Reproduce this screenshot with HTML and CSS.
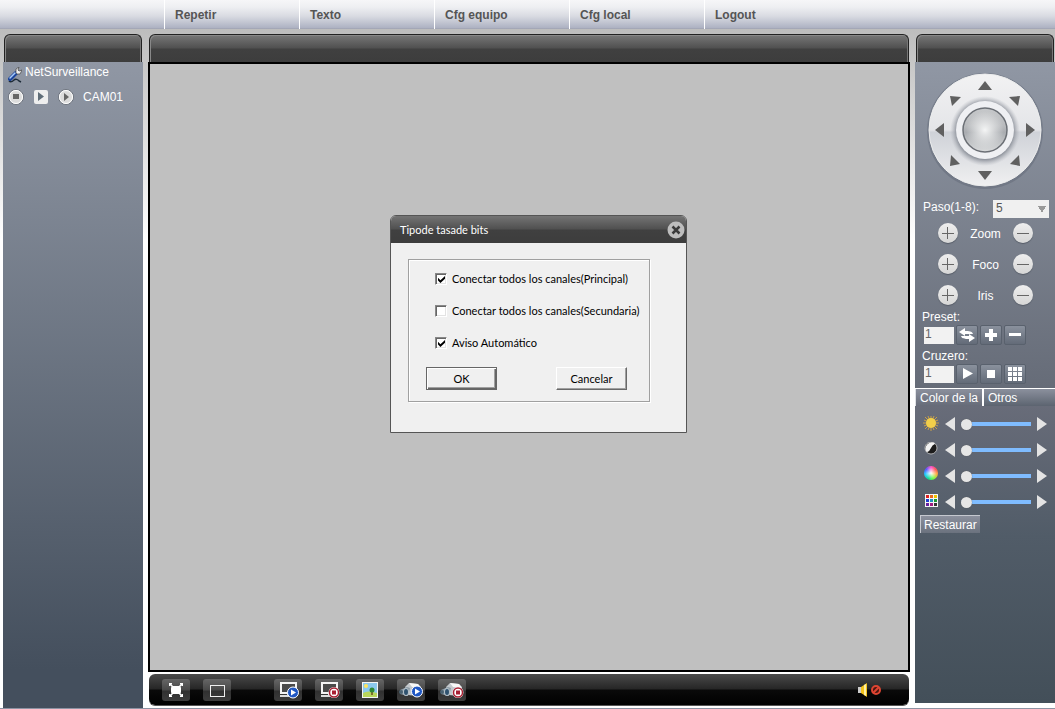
FILE: index.html
```html
<!DOCTYPE html>
<html lang="es">
<head>
    <meta charset="UTF-8">
    <title>NetSurveillance</title>
    <link rel="stylesheet" href="styles.css">
</head>
<body>

    <nav class="menu">
        <a href="#">Repetir</a>
        <a href="#">Texto</a>
        <a href="#">Cfg equipo</a>
        <a href="#">Cfg local</a>
        <a href="#">Logout</a>
    </nav>

    <div class="layout">

        <!-- cámaras -->
        <aside class="side">
            <div class="bar"></div>
            <div class="cams">
                <div class="device">
                    <svg class="tool" width="14" height="16" viewBox="0 0 14 16">
                        <path d="M1 14c2 2 4 0 5-1s4-1 5 1l2 1" fill="none" stroke="#1d2b38" stroke-width="1.500"/>
                        <path d="M2 12L8 6" stroke="#1c459c" stroke-width="4" stroke-linecap="round"/>
                        <path d="M2 11L7 6" stroke="#a9ccfa" stroke-width="1.500" stroke-linecap="round"/>
                        <path d="M8 6V2l3-2-1 3 1 1 3-1-2 4H9z" fill="#f0f0f0" stroke="#444" stroke-width="0.700"/>
                    </svg>
                    <span>NetSurveillance</span>
                </div>
                <div class="cam">
                    <button class="icon-btn" aria-label="Detener">
                        <svg width="16" height="16" viewBox="0 0 16 16"><circle cx="8" cy="8" r="7.500" fill="#e6e6e6" stroke="#6d737d"/><circle cx="8" cy="8" r="6.500" fill="#dcdcdc" stroke="#fff"/><rect x="5" y="5" width="6" height="5" fill="#666"/></svg>
                    </button>
                    <button class="icon-btn" aria-label="Flujo">
                        <svg width="16" height="16" viewBox="0 0 16 16"><rect x="1" y="1" width="14" height="14" rx="2" fill="#eee"/><path d="M5 3l6 4.500L5 12z" fill="#5f6d78"/></svg>
                    </button>
                    <button class="icon-btn" aria-label="Reproducir">
                        <svg width="16" height="16" viewBox="0 0 16 16"><circle cx="8" cy="8" r="7.500" fill="#e6e6e6" stroke="#6d737d"/><circle cx="8" cy="8" r="6.500" fill="#dcdcdc" stroke="#fff"/><path d="M6 4l5 4-5 4z" fill="#666"/></svg>
                    </button>
                    <span>CAM01</span>
                </div>
            </div>
        </aside>

        <!-- video -->
        <main class="center">
            <div class="bar"></div>
            <div class="video">
                <form class="dialog" role="dialog" aria-label="Tipode tasade bits">
                    <div class="dialog-head">
                        <span>Tipode tasade bits</span>
                        <button type="button" class="icon-btn" aria-label="Cerrar">
                            <svg width="18" height="18" viewBox="0 0 18 18"><circle cx="9" cy="9" r="8.500" fill="#bdbdbd"/><path d="M5.500 5.500l7 7M12.500 5.500l-7 7" stroke="#3a3a3a" stroke-width="2.500"/></svg>
                        </button>
                    </div>
                    <div class="dialog-body">
                        <div class="group">
                            <label class="check"><input type="checkbox" checked> Conectar todos los canales(Principal)</label>
                            <label class="check"><input type="checkbox"> Conectar todos los canales(Secundaria)</label>
                            <label class="check"><input type="checkbox" checked> Aviso Automático</label>
                            <div class="actions">
                                <button type="button" class="btn btn-default">OK</button>
                                <button type="button" class="btn">Cancelar</button>
                            </div>
                        </div>
                    </div>
                </form>
            </div>

            <div class="toolbar">
                <button class="tool-btn" aria-label="Pantalla completa">
                    <svg width="28" height="22" viewBox="0 0 28 22"><path d="M8 5l12 12M20 5L8 17" stroke="#fff" stroke-width="1.500"/><rect x="9" y="7" width="10" height="8" rx="2" fill="#fff"/><path d="M7 4h3v1L8 7H7zM21 4h-3v1l2 2h1zM7 18h3v-1l-2-2H7zM21 18h-3v-1l2-2h1z" fill="#fff"/></svg>
                </button>
                <button class="tool-btn" aria-label="Una ventana">
                    <svg width="28" height="22" viewBox="0 0 28 22"><rect x="7.500" y="6.500" width="14" height="11" fill="none" stroke="#eee"/></svg>
                </button>
                <button class="tool-btn gap" aria-label="Reproducir todo">
                    <svg width="28" height="22" viewBox="0 0 28 22"><rect x="7" y="4" width="15" height="10" fill="#4a4a4a" stroke="#f4f4f4" stroke-width="2"/><path d="M6 17h8v-2" fill="none" stroke="#ddd" stroke-width="2"/><circle cx="19" cy="13.500" r="5.500" fill="#1f57c4" stroke="#fff"/><path d="M17 10.500l5 3-5 3z" fill="#fff"/></svg>
                </button>
                <button class="tool-btn" aria-label="Detener todo">
                    <svg width="28" height="22" viewBox="0 0 28 22"><rect x="7" y="4" width="15" height="10" fill="#4a4a4a" stroke="#f4f4f4" stroke-width="2"/><path d="M6 17h8v-2" fill="none" stroke="#ddd" stroke-width="2"/><circle cx="19" cy="13.500" r="5.500" fill="#fff"/><circle cx="19" cy="13.500" r="4.500" fill="#fff" stroke="#a81f32" stroke-width="1.500"/><rect x="17" y="11.500" width="4" height="4" fill="#a81f32"/></svg>
                </button>
                <button class="tool-btn" aria-label="Capturar">
                    <svg width="28" height="22" viewBox="0 0 28 22"><rect x="6" y="3" width="16" height="16" fill="#f4f4f4"/><rect x="7" y="4" width="14" height="11" fill="#8cc9ee"/><path d="M7 14q5-3 14 0v4H7z" fill="#b9d65c"/><circle cx="10" cy="7" r="2" fill="#ffe45c"/><path d="M16 16v-3" stroke="#6b4a1d" stroke-width="1.500"/><circle cx="16" cy="11" r="2.500" fill="#2f8a35"/></svg>
                </button>
                <button class="tool-btn" aria-label="Grabar">
                    <svg width="28" height="22" viewBox="0 0 28 22"><path d="M8 8l4-4 9 1 3 3-4 9-9-1z" fill="#c3c8cc"/><path d="M12 4l9 1 3 4-9-1z" fill="#f7f7f7"/><path d="M3 11l7-3 3 1-2 8-8-2z" fill="#8b9aa5"/><ellipse cx="9" cy="13" rx="3" ry="4" fill="#b6c0c7"/><ellipse cx="9" cy="13" rx="2" ry="3" fill="#2f526f"/><circle cx="4" cy="13" r="2" fill="#4b6272"/><circle cx="20" cy="12.500" r="5.500" fill="#1f57c4" stroke="#fff"/><path d="M18 9.500l5 3-5 3z" fill="#fff"/></svg>
                </button>
                <button class="tool-btn" aria-label="Detener grabación">
                    <svg width="28" height="22" viewBox="0 0 28 22"><path d="M8 8l4-4 9 1 3 3-4 9-9-1z" fill="#c3c8cc"/><path d="M12 4l9 1 3 4-9-1z" fill="#f7f7f7"/><path d="M3 11l7-3 3 1-2 8-8-2z" fill="#8b9aa5"/><ellipse cx="9" cy="13" rx="3" ry="4" fill="#b6c0c7"/><ellipse cx="9" cy="13" rx="2" ry="3" fill="#2f526f"/><circle cx="4" cy="13" r="2" fill="#4b6272"/><circle cx="20" cy="13.500" r="5.500" fill="#fff"/><circle cx="20" cy="13.500" r="4.500" fill="#fff" stroke="#a81f32" stroke-width="1.500"/><rect x="18" y="11.500" width="4" height="4" fill="#a81f32"/></svg>
                </button>
                <button class="icon-btn sound" aria-label="Sonido">
                    <svg width="26" height="16" viewBox="0 0 26 16"><path d="M1 5h3v6H1z" fill="#ccc"/><path d="M4 5l6-4v14l-6-4z" fill="#f3c21b"/><path d="M7 3l2-1v12l-2-1z" fill="#fff0a0"/><circle cx="19" cy="8" r="4" fill="#4a1510" stroke="#dd4532" stroke-width="2"/><path d="M16 11l6-6" stroke="#dd4532" stroke-width="2"/></svg>
                </button>
            </div>
        </main>

        <!-- PTZ y color -->
        <aside class="side side-right">
            <div class="bar"></div>
            <div class="ptz">
                <div class="dial">
                    <svg width="118" height="118" viewBox="0 0 118 118">
                        <defs>
                            <linearGradient id="ring" x1="0" y1="0" x2="0" y2="1">
                                <stop offset="0" stop-color="#f2f2f3"/>
                                <stop offset="0.500" stop-color="#e4e5e8"/>
                                <stop offset="0.520" stop-color="#cfd2d8"/>
                                <stop offset="1" stop-color="#f0f0f1"/>
                            </linearGradient>
                            <radialGradient id="shade">
                                <stop offset="0.800" stop-color="#8a8f98"/>
                                <stop offset="1" stop-color="#b4b7be" stop-opacity="0"/>
                            </radialGradient>
                            <linearGradient id="ball" x1="0" y1="0" x2="0" y2="1">
                                <stop offset="0" stop-color="#c6c8ca"/>
                                <stop offset="0.400" stop-color="#b9bbbe"/>
                                <stop offset="0.550" stop-color="#a9acb0"/>
                                <stop offset="1" stop-color="#d9dbdc"/>
                            </linearGradient>
                            <radialGradient id="glow">
                                <stop offset="0" stop-color="#f4f5f5"/>
                                <stop offset="1" stop-color="#f4f5f5" stop-opacity="0"/>
                            </radialGradient>
                        </defs>
                        <circle cx="59" cy="60" r="58" fill="#596270" opacity="0.400"/>
                        <circle cx="59" cy="59" r="56" fill="url(#ring)" stroke="#eceded"/>
                        <circle cx="59" cy="60" r="35" fill="url(#shade)"/>
                        <circle cx="59" cy="59" r="29" fill="#eff0f3"/>
                        <circle cx="59" cy="59" r="22" fill="url(#ball)" stroke="#6b6f75" stroke-width="1.500"/>
                        <circle cx="59" cy="59" r="19" fill="url(#glow)"/>
                    </svg>
                    <button class="dir up" aria-label="Arriba"><svg width="14" height="14" viewBox="0 0 14 14"><path d="M7 2l7 9H0z"/></svg></button>
                    <button class="dir down" aria-label="Abajo"><svg width="14" height="14" viewBox="0 0 14 14"><path d="M7 12L0 3h14z"/></svg></button>
                    <button class="dir left" aria-label="Izquierda"><svg width="14" height="14" viewBox="0 0 14 14"><path d="M2 7l9-7v14z"/></svg></button>
                    <button class="dir right" aria-label="Derecha"><svg width="14" height="14" viewBox="0 0 14 14"><path d="M12 7L3 0v14z"/></svg></button>
                    <button class="dir up-left" aria-label="Arriba izquierda"><svg width="14" height="14" viewBox="0 0 14 14"><path d="M2 2l11 1-9 9z"/></svg></button>
                    <button class="dir up-right" aria-label="Arriba derecha"><svg width="14" height="14" viewBox="0 0 14 14"><path d="M12 2L1 3l9 9z"/></svg></button>
                    <button class="dir down-left" aria-label="Abajo izquierda"><svg width="14" height="14" viewBox="0 0 14 14"><path d="M2 12l1-11 9 9z"/></svg></button>
                    <button class="dir down-right" aria-label="Abajo derecha"><svg width="14" height="14" viewBox="0 0 14 14"><path d="M12 12l-1-11-9 9z"/></svg></button>
                </div>

                <div class="step">
                    <label for="step">Paso(1-8):</label>
                    <select id="step"><option>5</option></select>
                </div>

                <div class="lens">
                    <button class="round" aria-label="Zoom más"><svg width="20" height="20" viewBox="0 0 20 20"><path d="M9.500 4v12M4 10.500h12"/></svg></button>
                    <span>Zoom</span>
                    <button class="round" aria-label="Zoom menos"><svg width="20" height="20" viewBox="0 0 20 20"><path d="M4 10.500h12"/></svg></button>
                </div>
                <div class="lens">
                    <button class="round" aria-label="Foco más"><svg width="20" height="20" viewBox="0 0 20 20"><path d="M9.500 4v12M4 10.500h12"/></svg></button>
                    <span>Foco</span>
                    <button class="round" aria-label="Foco menos"><svg width="20" height="20" viewBox="0 0 20 20"><path d="M4 10.500h12"/></svg></button>
                </div>
                <div class="lens">
                    <button class="round" aria-label="Iris más"><svg width="20" height="20" viewBox="0 0 20 20"><path d="M9.500 4v12M4 10.500h12"/></svg></button>
                    <span>Iris</span>
                    <button class="round" aria-label="Iris menos"><svg width="20" height="20" viewBox="0 0 20 20"><path d="M4 10.500h12"/></svg></button>
                </div>

                <div class="preset">
                    <label for="preset">Preset:</label>
                    <div class="preset-row">
                        <input type="text" id="preset" value="1">
                        <button class="small" aria-label="Ir"><svg width="20" height="18" viewBox="0 0 20 18"><path d="M2 6l6-4v3c4 0 7 0 8 3H8v2zM18 12l-6 4v-3c-4 0-7 0-8-3h8V8z"/></svg></button>
                        <button class="small" aria-label="Agregar"><svg width="20" height="18" viewBox="0 0 20 18"><path d="M8 3h4v4h4v4h-4v4H8v-4H4V7h4z"/></svg></button>
                        <button class="small" aria-label="Quitar"><svg width="20" height="18" viewBox="0 0 20 18"><path d="M4 7h12v3H4z"/></svg></button>
                    </div>
                </div>
                <div class="preset">
                    <label for="cruise">Cruzero:</label>
                    <div class="preset-row">
                        <input type="text" id="cruise" value="1">
                        <button class="small" aria-label="Iniciar"><svg width="20" height="18" viewBox="0 0 20 18"><path d="M6 3l10 5.500L6 14z"/></svg></button>
                        <button class="small" aria-label="Parar"><svg width="20" height="18" viewBox="0 0 20 18"><path d="M6 5h8v8H6z"/></svg></button>
                        <button class="small" aria-label="Lista"><svg width="20" height="18" viewBox="0 0 20 18"><path d="M3 2h4v4H3zM8 2h4v4H8zM13 2h4v4h-4zM3 7h4v4H3zM8 7h4v4H8zM13 7h4v4h-4zM3 12h4v4H3zM8 12h4v4H8zM13 12h4v4h-4z"/></svg></button>
                    </div>
                </div>
            </div>

            <div class="tabs">
                <button class="tab">Color de la</button>
                <button class="tab">Otros</button>
            </div>

            <div class="color">
                <div class="slider">
                    <svg width="16" height="16" viewBox="0 0 16 16"><path d="M8 0v15M0 7h16M2 1l12 12M14 1L2 13M5 0l6 14M11 0L5 14M1 4l14 6M1 10l14-6" stroke="#c9a04a"/><circle cx="8" cy="7" r="5" fill="#f2cf4a"/></svg>
                    <button class="arrow" aria-label="Menos brillo"><svg width="10" height="14" viewBox="0 0 10 14"><path d="M0 7l10-7v14z"/></svg></button>
                    <input type="range" value="0" aria-label="Brillo">
                    <button class="arrow" aria-label="Más brillo"><svg width="10" height="14" viewBox="0 0 10 14"><path d="M10 7L0 0v14z"/></svg></button>
                </div>
                <div class="slider">
                    <svg width="16" height="16" viewBox="0 0 16 16"><circle cx="8" cy="6" r="6" fill="#1c1c1c" stroke="#ddd" stroke-width="0.700"/><path d="M12.200 1.800a6 6 0 0 0-8.400 8.400q3-1 4.200-4.200 1-3 4.200-4.200z" fill="#f2f2f2"/></svg>
                    <button class="arrow" aria-label="Menos contraste"><svg width="10" height="14" viewBox="0 0 10 14"><path d="M0 7l10-7v14z"/></svg></button>
                    <input type="range" value="0" aria-label="Contraste">
                    <button class="arrow" aria-label="Más contraste"><svg width="10" height="14" viewBox="0 0 10 14"><path d="M10 7L0 0v14z"/></svg></button>
                </div>
                <div class="slider">
                    <span class="wheel"></span>
                    <button class="arrow" aria-label="Menos saturación"><svg width="10" height="14" viewBox="0 0 10 14"><path d="M0 7l10-7v14z"/></svg></button>
                    <input type="range" value="0" aria-label="Saturación">
                    <button class="arrow" aria-label="Más saturación"><svg width="10" height="14" viewBox="0 0 10 14"><path d="M10 7L0 0v14z"/></svg></button>
                </div>
                <div class="slider">
                    <svg width="16" height="16" viewBox="0 0 16 16"><path d="M2 0h13v13H2z" fill="#f6f6f6"/><path d="M3 1h3v3H3z" fill="#d22"/><path d="M7 1h3v3H7z" fill="#e96a1c"/><path d="M11 1h3v3h-3z" fill="#f0c400"/><path d="M3 5h3v3H3z" fill="#1b3fd0"/><path d="M7 5h3v3H7z" fill="#2090c0"/><path d="M11 5h3v3h-3z" fill="#1c9a30"/><path d="M3 9h3v3H3z" fill="#6a1fa0"/><path d="M7 9h3v3H7z" fill="#a01d80"/><path d="M11 9h3v3h-3z" fill="#333"/></svg>
                    <button class="arrow" aria-label="Menos tono"><svg width="10" height="14" viewBox="0 0 10 14"><path d="M0 7l10-7v14z"/></svg></button>
                    <input type="range" value="0" aria-label="Tono">
                    <button class="arrow" aria-label="Más tono"><svg width="10" height="14" viewBox="0 0 10 14"><path d="M10 7L0 0v14z"/></svg></button>
                </div>
                <button class="restore">Restaurar</button>
            </div>
        </aside>
    </div>

</body>
</html>
```
FILE: styles.css
```css
* {
    margin: 0;
    padding: 0;
    box-sizing: border-box;
}

body {
    display: flex;
    flex-direction: column;
    height: 100vh;
    font-family: "Liberation Sans", Arial, sans-serif;
    font-size: 12px;
    line-height: 16px;
    color: #fff;
    background: linear-gradient(#bdbdbd 30px, #fff 240px);
    border-bottom: 1px solid #8d93a3;
}

button, input, select {
    font: inherit;
    color: inherit;
    border: none;
    background: none;
}

svg {
    display: block;
    flex: none;
}

/* menú superior */
.menu {
    display: flex;
    height: 29px;
    padding-left: 164px;
    background: linear-gradient(#f6f6f8, #eeeff2 7px, #d9dbe2 16px, #adb1c2 28px, #9a9dab);
}

.menu a {
    width: 135px;
    padding: 7px 10px;
    border-left: 1px solid #fff;
    color: #555;
    font-weight: bold;
    text-decoration: none;
}

.layout {
    flex: 1;
    display: grid;
    grid-template-columns: 140px 1fr 140px;
    gap: 5px;
    min-height: 0;
    padding: 5px 0 0 3px;
}

.bar {
    flex: none;
    height: 28px;
    margin: 0 1px;
    border: 1px solid #222;
    border-bottom: none;
    border-radius: 6px 6px 0 0;
    background: linear-gradient(#777, #505050 13px, #404040 14px, #3d3d3d);
    box-shadow: inset 1px 1px 0 #888, inset -1px 0 0 #777;
}

.side, .center {
    display: flex;
    flex-direction: column;
    min-width: 0;
    min-height: 0;
}

.side-right {
    padding-bottom: 5px;
}

/* cámaras */
.cams {
    flex: 1;
    padding: 2px 5px;
    background: linear-gradient(#9097a4, #444f5d 94%);
}

.device {
    display: flex;
    gap: 3px;
    height: 16px;
}

.tool {
    margin-top: 3px;
}

.cam {
    display: flex;
    align-items: center;
    gap: 9px;
    margin-top: 9px;
}

.icon-btn {
    cursor: pointer;
}

/* video */
.video {
    position: relative;
    flex: 1;
    border: 2px solid #000;
    background: #c0c0c0;
}

.dialog {
    position: absolute;
    top: 151px;
    left: 240px;
    width: 297px;
    border: 1px solid #555;
    border-radius: 6px 6px 0 0;
    background: #f0f0f0;
    color: #000;
    font-family: Lato, "Liberation Sans", sans-serif;
    font-size: 11px;
}

.dialog-head {
    display: flex;
    align-items: center;
    justify-content: space-between;
    height: 27px;
    padding: 0 1px 0 9px;
    border-radius: 5px 5px 0 0;
    background: linear-gradient(#747474, #505050 13px, #404040 14px, #3d3d3d);
    color: #fff;
}

.dialog-body {
    padding: 16px 36px 30px 17px;
}

.group {
    padding: 11px 0 11px 17px;
    border: 1px solid #a0a0a0;
    box-shadow: 1px 1px 0 #fff, inset 1px 1px 0 #fff;
}

.check {
    display: flex;
    align-items: center;
    gap: 5px;
    margin-bottom: 16px;
    padding-left: 9px;
    white-space: nowrap;
}

.check input {
    appearance: none;
    width: 12px;
    height: 12px;
    border: 1px solid;
    border-color: #888 #fff #fff #888;
    background: #fff;
    box-shadow: inset 1px 1px 0 #666, inset -1px -1px 0 #e3e3e3;
}

.check input:checked::before {
    content: "";
    display: block;
    width: 7px;
    height: 7px;
    margin: 2px;
    background: #000;
    clip-path: polygon(0 25%, 35% 60%, 100% 0, 100% 40%, 35% 100%, 0 65%);
}

.actions {
    display: flex;
    justify-content: space-between;
    padding-right: 22px;
}

.btn {
    width: 71px;
    height: 23px;
    border: 1px solid;
    border-color: #fff #696969 #696969 #fff;
    background: #f0f0f0;
    box-shadow: inset -1px -1px 0 #a0a0a0;
}

.btn-default {
    border-color: #666;
    box-shadow: inset 1px 1px 0 #fff, inset -1px -1px 0 #666, inset -2px -2px 0 #a0a0a0;
}

/* barra inferior */
.toolbar {
    display: flex;
    align-items: center;
    gap: 13px;
    height: 31px;
    margin: 2px 1px 3px;
    padding: 0 26px 0 13px;
    border-radius: 6px;
    background: linear-gradient(#4a4a4a, #262626 15px, #0a0a0a 16px, #000);
    box-shadow: 0 1px 0 #555;
}

.tool-btn {
    width: 28px;
    height: 22px;
    border-radius: 3px;
    background: linear-gradient(#666, #484848 11px, #303030 12px, #3c3c3c);
}

.gap {
    margin-left: 30px;
}

.sound {
    margin-left: auto;
}

/* PTZ */
.ptz {
    height: 326px;
    padding-top: 9px;
    background: linear-gradient(#9097a4, #666c78);
}

.dial {
    position: relative;
    width: 118px;
    height: 118px;
    margin: 0 auto 10px;
}

.dir {
    position: absolute;
    width: 14px;
    height: 14px;
    fill: #606060;
}

.up { left: 52px; top: 8px; }
.down { left: 52px; top: 97px; }
.left { left: 7px; top: 52px; }
.right { left: 97px; top: 52px; }
.up-left { left: 22px; top: 23px; }
.up-right { left: 82px; top: 23px; }
.down-left { left: 22px; top: 83px; }
.down-right { left: 82px; top: 83px; }

.step {
    display: flex;
    justify-content: space-between;
    padding: 0 6px 0 8px;
}

.step select {
    appearance: none;
    width: 56px;
    height: 18px;
    margin-top: 1px;
    padding: 0 3px 4px;
    border-radius: 0;
    background: linear-gradient(to bottom left, #999 50%, transparent 50%) 45px 6px / 4px 7px no-repeat,
        linear-gradient(to bottom right, #999 50%, transparent 50%) 49px 6px / 4px 7px no-repeat, #f0f0f0;
    color: #555;
}

.lens {
    display: flex;
    align-items: center;
    justify-content: space-between;
    height: 20px;
    margin-top: 11px;
    padding: 0 22px 0 23px;
}

.step + .lens {
    margin-top: 5px;
}

.lens span {
    padding-top: 2px;
}

.round {
    width: 20px;
    height: 20px;
    border-radius: 50%;
    background: linear-gradient(#eee, #d6d6d6);
    box-shadow: 0 1px 1px #555b66;
    stroke: #666;
}

.preset {
    padding: 3px 7px 0;
}

.lens + .preset {
    padding-top: 4px;
}

.preset label {
    display: block;
}

.preset-row {
    display: flex;
    align-items: center;
    gap: 2px;
    height: 20px;
    padding-left: 2px;
}

.preset-row input {
    width: 30px;
    height: 17px;
    padding: 0 1px 3px;
    background: #f2f2f2;
    color: #666;
}

.small {
    width: 22px;
    height: 20px;
    border: 1px solid #59616d;
    border-radius: 2px;
    background: linear-gradient(#8a919d, #636b78);
    fill: #fff;
}

/* color */
.tabs {
    display: flex;
    border-top: 1px solid #fff;
    background: linear-gradient(#8b909d, #5c6470);
}

.tab {
    height: 17px;
    padding: 0 4px;
    border-left: 1px solid #dfe1e5;
    background: linear-gradient(#8b909d, #666b78);
}

.tab + .tab {
    border-left: 2px solid #fff;
    background: none;
}

.color {
    flex: 1;
    padding: 5px 8px;
    background: linear-gradient(#686c79, #515c68 130px, #434f59);
}

.slider {
    display: flex;
    align-items: center;
    gap: 6px;
    height: 26px;
}

.arrow {
    fill: #e4e4e4;
}

.slider input {
    appearance: none;
    flex: 1;
    min-width: 0;
    height: 12px;
    background: linear-gradient(#7fbcff, #7fbcff) center / 100% 4px no-repeat;
}

.slider input::-webkit-slider-thumb {
    appearance: none;
    width: 11px;
    height: 11px;
    border-radius: 50%;
    background: #e6e6e6;
    box-shadow: 0 0 1px #555;
}

.wheel {
    width: 14px;
    height: 14px;
    margin: 0 1px 6px;
    border-radius: 50%;
    background: radial-gradient(#fff, transparent 60%), conic-gradient(#f5c, #f55, #f9b040, #7f4, #1d9, #2cf, #55f, #f5c);
}

.restore {
    height: 18px;
    margin-left: -3px;
    padding: 0 3px;
    border-top: 1px solid #c5c8cf;
    border-left: 1px solid #c5c8cf;
    background: linear-gradient(#8b909d, #6b727e);
}
```
